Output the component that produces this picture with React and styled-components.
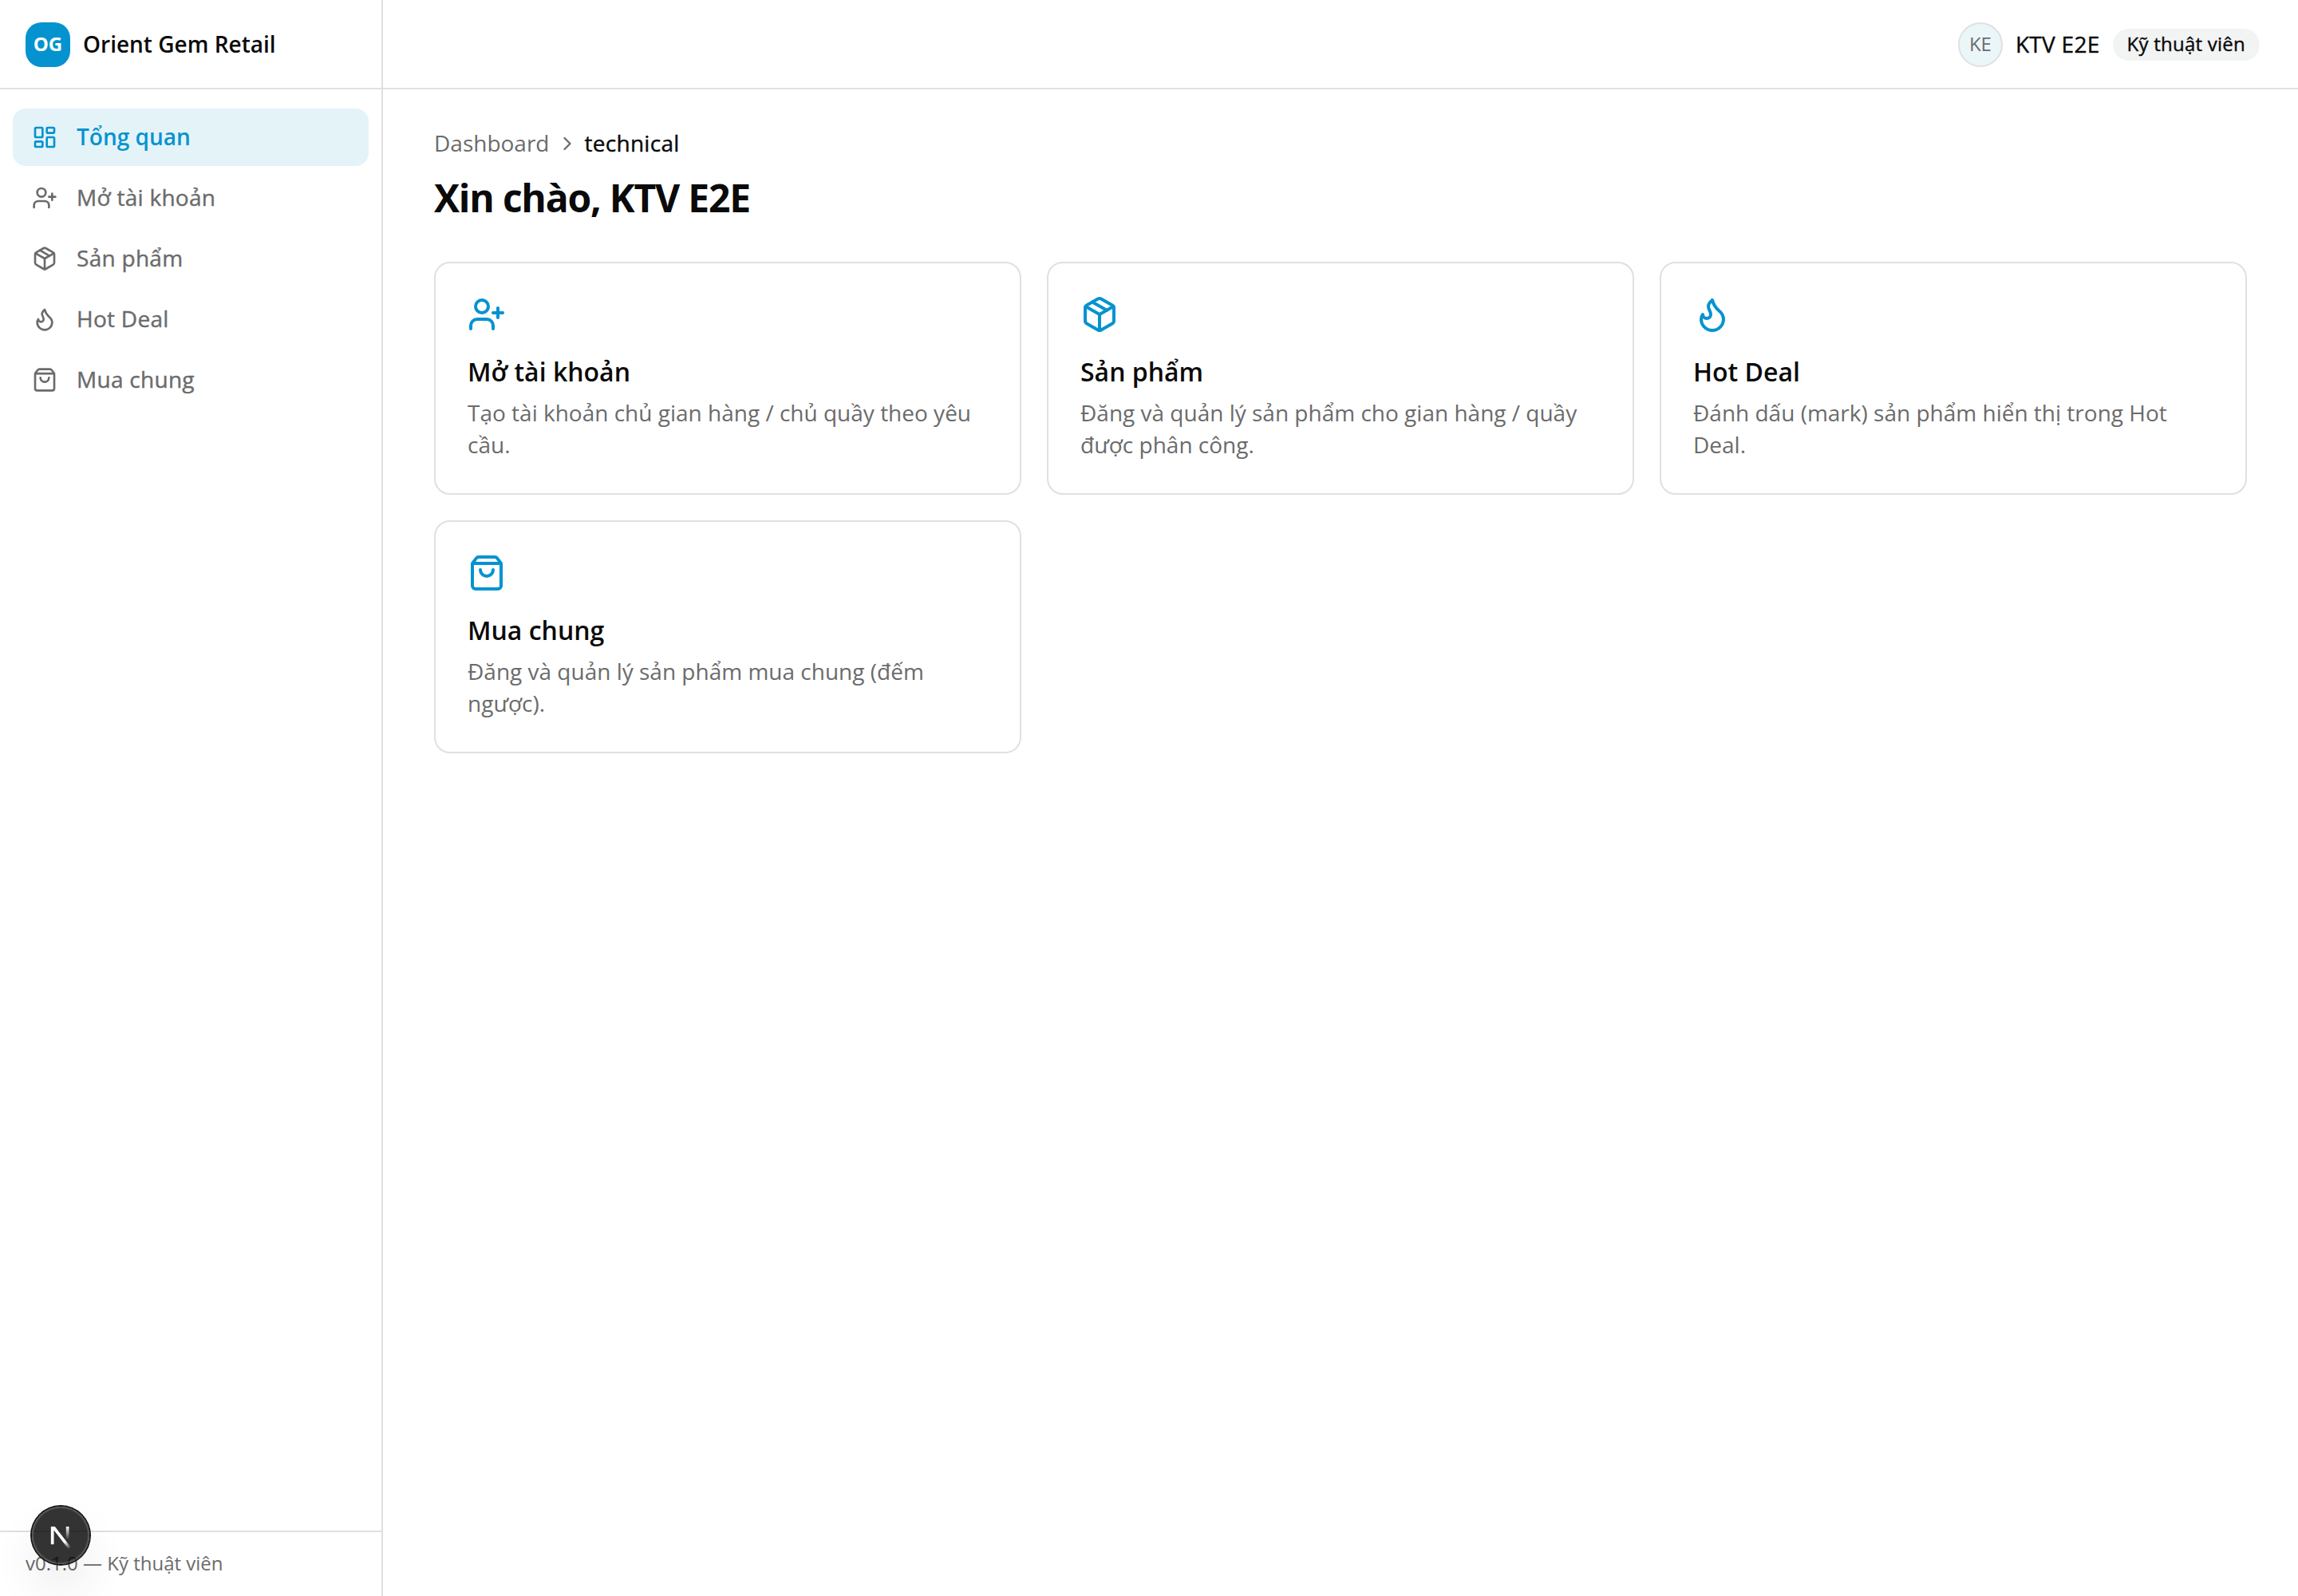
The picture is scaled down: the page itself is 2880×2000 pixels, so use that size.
import React from "react";
import styled, { createGlobalStyle, css } from "styled-components";
import { LayoutDashboard, UserPlus, Package, Flame, ShoppingBag, ChevronRight } from "lucide-react";

const c = {
  fg: "#0a0a0a",
  muted: "#6b6b6b",
  border: "#e0e0e0",
  primary: "#0593d0",
  primarySoft: "#e4f3f8",
  secondary: "#f2f4f4",
};

/* Open Sans has no installed medium face: thicken and widen the regular one. */
const medium = css`
  font-weight: 400;
  letter-spacing: 0.01em;
  -webkit-text-stroke: 0.4px currentColor;
`;

const GlobalStyle = createGlobalStyle`
  *, *::before, *::after { box-sizing: border-box; }
  body { margin: 0; background: #fff; }
  h1, h2, p { margin: 0; }
`;

const Shell = styled.div`
  display: grid;
  grid-template-columns: 480px 1fr;
  height: 2000px;
  font-family: "Open Sans", "Noto Sans", sans-serif;
  font-size: 28px;
  line-height: 40px;
  color: ${c.fg};
  background: #fff;
`;

const Sidebar = styled.aside`
  display: flex;
  flex-direction: column;
  border-right: 2px solid ${c.border};
`;

const Brand = styled.div`
  display: flex;
  align-items: center;
  gap: 16px;
  height: 112px;
  padding: 2px 32px 0;
  border-bottom: 2px solid ${c.border};
`;

const BrandName = styled.span`
  padding-bottom: 2px;
  font-weight: 600;
`;

const BrandMark = styled.div`
  display: flex;
  align-items: center;
  justify-content: center;
  width: 56px;
  height: 56px;
  padding-bottom: 2px;
  border-radius: 20px;
  background: ${c.primary};
  color: #fff;
  font-size: 24px;
  font-weight: 700;
  line-height: 32px;
`;

const Nav = styled.nav`
  display: flex;
  flex: 1;
  flex-direction: column;
  gap: 4px;
  padding: 24px 16px;
`;

const NavItem = styled.a`
  display: flex;
  align-items: center;
  gap: 24px;
  height: 72px;
  padding: 0 24px;
  border-radius: 16px;
  color: ${(p) => (p.$active ? c.primary : c.muted)};
  background: ${(p) => (p.$active ? c.primarySoft : "transparent")};
`;

const NavLabel = styled.span`
  padding-bottom: 2px;
  ${(p) => (p.$active ? "font-weight: 600;" : medium)}
`;

const SidebarFooter = styled.div`
  padding: 23px 32px 25px;
  border-top: 2px solid ${c.border};
  color: ${c.muted};
  font-size: 24px;
  line-height: 32px;
`;

const Content = styled.div`
  display: flex;
  flex-direction: column;
`;

const Topbar = styled.header`
  display: flex;
  align-items: center;
  justify-content: flex-end;
  gap: 16px;
  height: 112px;
  padding: 2px 48px 0;
  border-bottom: 2px solid ${c.border};
`;

const UserName = styled.span`
  padding-bottom: 2px;
  ${medium}
`;

const Avatar = styled.div`
  display: flex;
  align-items: center;
  justify-content: center;
  width: 56px;
  height: 56px;
  padding-bottom: 2px;
  border: 2px solid ${c.border};
  border-radius: 50%;
  background: #ebf6f9;
  color: ${c.muted};
  font-size: 24px;
  line-height: 32px;
`;

const Badge = styled.span`
  display: flex;
  align-items: center;
  height: 40px;
  padding: 0 18px 2px;
  border-radius: 20px;
  background: ${c.secondary};
  font-size: 24px;
  line-height: 32px;
  ${medium}
`;

const Main = styled.main`
  padding: 48px 64px;
`;

const Breadcrumb = styled.div`
  display: flex;
  align-items: center;
  gap: 8px;
  height: 40px;
  color: ${c.muted};
`;

const Crumb = styled.span`
  padding-bottom: 2px;
  ${(p) =>
    p.$current &&
    css`
      color: ${c.fg};
      ${medium}
    `}
`;

const Heading = styled.h1`
  margin-top: 16px;
  font-size: 48px;
  line-height: 64px;
  font-weight: 700;
  letter-spacing: -0.025em;
`;

const Cards = styled.div`
  display: grid;
  grid-template-columns: repeat(3, 1fr);
  gap: 32px;
  margin-top: 48px;
`;

const Card = styled.article`
  padding: 40px;
  border: 2px solid ${c.border};
  border-radius: 20px;
  svg {
    display: block;
    color: ${c.primary};
  }
`;

const CardTitle = styled.h2`
  margin-top: 24px;
  font-size: 32px;
  line-height: 48px;
  font-weight: 600;
`;

const CardText = styled.p`
  margin-top: 7px;
  padding-bottom: 1px;
  color: ${c.muted};
`;

const DevBadge = styled.div`
  position: fixed;
  left: 40px;
  bottom: 40px;
  width: 72px;
  height: 72px;
  border-radius: 50%;
  background: rgba(0, 0, 0, 0.8);
  box-shadow: 0 0 0 2px #171717, inset 0 0 0 2px rgba(255, 255, 255, 0.14), 0 32px 64px -16px rgba(0, 0, 0, 0.24);
  svg { display: block; }
`;

const sections = [
  { icon: UserPlus, title: "Mở tài khoản", text: "Tạo tài khoản chủ gian hàng / chủ quầy theo yêu cầu." },
  { icon: Package, title: "Sản phẩm", text: "Đăng và quản lý sản phẩm cho gian hàng / quầy được phân công." },
  { icon: Flame, title: "Hot Deal", text: "Đánh dấu (mark) sản phẩm hiển thị trong Hot Deal." },
  { icon: ShoppingBag, title: "Mua chung", text: "Đăng và quản lý sản phẩm mua chung (đếm ngược)." },
];

function NextMark() {
  return (
    <svg width="72" height="72" viewBox="0 0 36 36" fill="none">
      <defs>
        <linearGradient id="diag" gradientUnits="userSpaceOnUse" x1="9.95" y1="11.12" x2="15.48" y2="17.97">
          <stop stopColor="#fff" />
          <stop offset="0.604" stopColor="#fff" stopOpacity="0" />
        </linearGradient>
        <linearGradient id="stem" gradientUnits="userSpaceOnUse" x1="11.82" y1="1.4" x2="11.79" y2="9.63">
          <stop stopColor="#fff" />
          <stop offset="1" stopColor="#fff" stopOpacity="0" />
        </linearGradient>
        <clipPath id="top">
          <rect x="0" y="1.5" width="20" height="20" />
        </clipPath>
      </defs>
      <g transform="translate(10.5 11)" strokeWidth="1.86" clipPath="url(#top)">
        <path d="M13.3 15.2 L2.34 1 V12.6" stroke="url(#diag)" />
        <path d="M11.825 1.5 V13.1" stroke="url(#stem)" />
      </g>
    </svg>
  );
}

export default function App() {
  return (
    <>
      <GlobalStyle />
      <Shell>
        <Sidebar>
          <Brand>
            <BrandMark>OG</BrandMark>
            <BrandName>Orient Gem Retail</BrandName>
          </Brand>
          <Nav>
            <NavItem $active>
              <LayoutDashboard size={32} />
              <NavLabel $active>Tổng quan</NavLabel>
            </NavItem>
            {sections.map(({ icon: Icon, title }) => (
              <NavItem key={title}>
                <Icon size={32} />
                <NavLabel>{title}</NavLabel>
              </NavItem>
            ))}
          </Nav>
          <SidebarFooter>v0.1.0 — Kỹ thuật viên</SidebarFooter>
        </Sidebar>
        <Content>
          <Topbar>
            <Avatar>KE</Avatar>
            <UserName>KTV E2E</UserName>
            <Badge>Kỹ thuật viên</Badge>
          </Topbar>
          <Main>
            <Breadcrumb>
              <Crumb>Dashboard</Crumb>
              <ChevronRight size={28} />
              <Crumb $current>technical</Crumb>
            </Breadcrumb>
            <Heading>Xin chào, KTV E2E</Heading>
            <Cards>
              {sections.map(({ icon: Icon, title, text }) => (
                <Card key={title}>
                  <Icon size={48} />
                  <CardTitle>{title}</CardTitle>
                  <CardText>{text}</CardText>
                </Card>
              ))}
            </Cards>
          </Main>
        </Content>
      </Shell>
      <DevBadge>
        <NextMark />
      </DevBadge>
    </>
  );
}
